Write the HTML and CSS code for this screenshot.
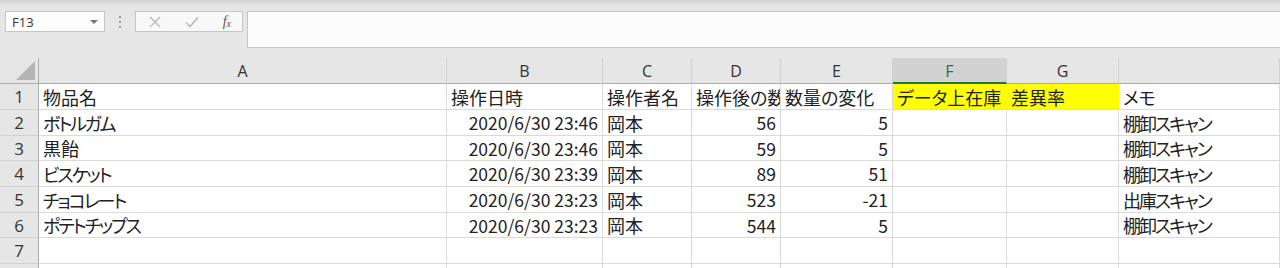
FILE: index.html
```html
<!DOCTYPE html>
<html>
<head>
    <meta charset="utf-8">
    <title>Book1 - Excel</title>
    <link rel="stylesheet" href="styles.css">
</head>
<body>
    <div class="top-strip"></div>
    <div class="formula-bar">
        <div class="name-box">
            <span>F13</span>
            <span class="caret"></span>
        </div>
        <div class="grip"><i></i><i></i><i></i></div>
        <div class="fx-box">
            <svg width="14" height="14" viewBox="0 0 14 14"><path d="M2 2 L12 12 M12 2 L2 12" stroke="#b9b9b9" stroke-width="1.4" fill="none"/></svg>
            <svg width="16" height="14" viewBox="0 0 16 14"><path d="M2 7.5 L6 11.5 L14 2.5" stroke="#b9b9b9" stroke-width="1.6" fill="none"/></svg>
            <span class="fx">f<sub>x</sub></span>
        </div>
        <div class="formula-input"></div>
    </div>

    <div class="sheet">
        <div class="corner"><span class="tri"></span></div>
        <div class="col-head">A</div>
        <div class="col-head">B</div>
        <div class="col-head">C</div>
        <div class="col-head">D</div>
        <div class="col-head">E</div>
        <div class="col-head active">F</div>
        <div class="col-head">G</div>
        <div class="col-head"></div>

        <div class="row-head">1</div>
        <div class="cell">物品名</div>
        <div class="cell">操作日時</div>
        <div class="cell">操作者名</div>
        <div class="cell">操作後の数量</div>
        <div class="cell">数量の変化</div>
        <div class="cell yellow">データ上在庫</div>
        <div class="cell yellow">差異率</div>
        <div class="cell">メモ</div>

        <div class="row-head">2</div>
        <div class="cell kana">ボトルガム</div>
        <div class="cell num">2020/6/30 23:46</div>
        <div class="cell">岡本</div>
        <div class="cell num">56</div>
        <div class="cell num">5</div>
        <div class="cell"></div>
        <div class="cell"></div>
        <div class="cell kana">棚卸スキャン</div>

        <div class="row-head">3</div>
        <div class="cell">黒飴</div>
        <div class="cell num">2020/6/30 23:46</div>
        <div class="cell">岡本</div>
        <div class="cell num">59</div>
        <div class="cell num">5</div>
        <div class="cell"></div>
        <div class="cell"></div>
        <div class="cell kana">棚卸スキャン</div>

        <div class="row-head">4</div>
        <div class="cell kana">ビスケット</div>
        <div class="cell num">2020/6/30 23:39</div>
        <div class="cell">岡本</div>
        <div class="cell num">89</div>
        <div class="cell num">51</div>
        <div class="cell"></div>
        <div class="cell"></div>
        <div class="cell kana">棚卸スキャン</div>

        <div class="row-head">5</div>
        <div class="cell kana">チョコレート</div>
        <div class="cell num">2020/6/30 23:23</div>
        <div class="cell">岡本</div>
        <div class="cell num">523</div>
        <div class="cell num">-21</div>
        <div class="cell"></div>
        <div class="cell"></div>
        <div class="cell kana">出庫スキャン</div>

        <div class="row-head">6</div>
        <div class="cell kana">ポテトチップス</div>
        <div class="cell num">2020/6/30 23:23</div>
        <div class="cell">岡本</div>
        <div class="cell num">544</div>
        <div class="cell num">5</div>
        <div class="cell"></div>
        <div class="cell"></div>
        <div class="cell kana">棚卸スキャン</div>

        <div class="row-head">7</div>
        <div class="cell"></div>
        <div class="cell"></div>
        <div class="cell"></div>
        <div class="cell"></div>
        <div class="cell"></div>
        <div class="cell"></div>
        <div class="cell"></div>
        <div class="cell"></div>

        <div class="row-head"></div>
        <div class="cell"></div>
        <div class="cell"></div>
        <div class="cell"></div>
        <div class="cell"></div>
        <div class="cell"></div>
        <div class="cell"></div>
        <div class="cell"></div>
        <div class="cell"></div>
    </div>
</body>
</html>
```

FILE: styles.css
```css
* {
    box-sizing: border-box;
}

body {
    margin: 0;
    background: #e6e6e6;
    font-family: "Noto Sans CJK JP", "Noto Sans", sans-serif;
    color: #222;
    overflow: hidden;
    height: 268px;
}

.top-strip {
    height: 5px;
    background: linear-gradient(#d2d2d2, #e3e3e3);
}

.formula-bar {
    display: flex;
    align-items: flex-start;
    padding: 6px 0 0 5px;
    height: 53px;
}

.name-box {
    width: 100px;
    height: 21px;
    background: #fdfdfd;
    border: 1px solid #c6c6c6;
    display: flex;
    align-items: center;
    justify-content: space-between;
    padding: 0 6px 0 6px;
    font-family: "Open Sans", sans-serif;
    font-size: 13px;
    color: #333;
}

.caret {
    width: 0;
    height: 0;
    border-left: 4px solid transparent;
    border-right: 4px solid transparent;
    border-top: 4px solid #777;
}

.grip {
    width: 30px;
    height: 21px;
    display: flex;
    flex-direction: column;
    align-items: center;
    justify-content: center;
    gap: 3px;
}

.grip i {
    width: 2px;
    height: 2px;
    background: #9a9a9a;
}

.fx-box {
    width: 108px;
    height: 21px;
    background: #f8f8f8;
    border: 1px solid #c6c6c6;
    display: flex;
    align-items: center;
    justify-content: space-between;
    padding: 0 11px 0 12px;
}

.fx {
    font-family: "Liberation Serif", serif;
    font-style: italic;
    font-size: 14px;
    color: #555;
    line-height: 1;
}

.fx sub {
    font-size: 10px;
    vertical-align: -1px;
}

.formula-input {
    flex: 1;
    height: 37px;
    margin-left: 4px;
    background: #fcfcfc;
    border: 1px solid #c6c6c6;
    border-right: none;
}

.sheet {
    display: grid;
    grid-template-columns: 39px 408px 156px 89px 89px 112px 114px 112px 1fr;
    grid-template-rows: 26px 26px 26px 25px 26px 26px 25px 26px 26px;
    background: #fff;
}

.corner {
    background: #e6e6e6;
    border-right: 1px solid #ababab;
    border-bottom: 1px solid #ababab;
    position: relative;
}

.tri {
    position: absolute;
    right: 3px;
    bottom: 3px;
    width: 0;
    height: 0;
    border-left: 19px solid transparent;
    border-bottom: 19px solid #b4b4b4;
}

.col-head {
    background: #e6e6e6;
    border-right: 1px solid #d0d0d0;
    border-bottom: 1px solid #ababab;
    display: flex;
    align-items: center;
    justify-content: center;
    font-family: "Open Sans", sans-serif;
    font-size: 16px;
    color: #333;
}

.col-head.active {
    background: #d2d2d2;
    color: #217346;
    border-bottom: 2px solid #217346;
    padding-top: 1px;
}

.row-head {
    background: #e6e6e6;
    border-right: 1px solid #ababab;
    border-bottom: 1px solid #d0d0d0;
    display: flex;
    align-items: center;
    justify-content: center;
    font-family: "Open Sans", sans-serif;
    font-size: 17px;
    color: #333;
}

.cell {
    border-right: 1px solid #dadada;
    border-bottom: 1px solid #dadada;
    padding: 0 4px;
    font-size: 18px;
    font-feature-settings: "palt";
    white-space: nowrap;
    overflow: hidden;
    display: flex;
    align-items: center;
}

.cell.kana {
    letter-spacing: -2px;
}

.cell.num {
    justify-content: flex-end;
    font-size: 17.5px;
}

.cell.yellow {
    background: #ffff00;
    border-right-color: #ffff00;
}
```
